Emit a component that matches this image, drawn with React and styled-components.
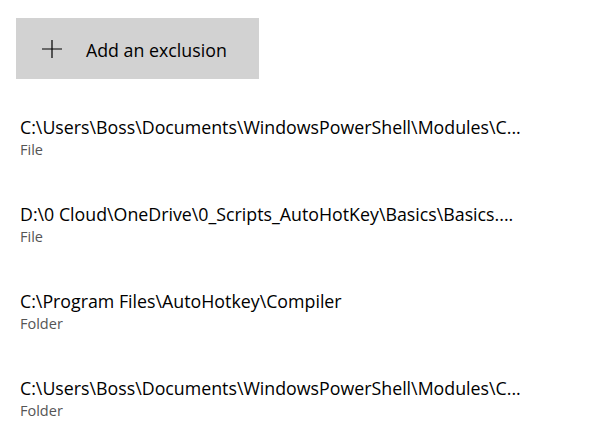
import styled, { createGlobalStyle } from "styled-components";

const GlobalStyle = createGlobalStyle`
  html, body {
    margin: 0;
    padding: 0;
    background: #ffffff;
    font-family: "Open Sans", "Noto Sans", sans-serif;
    color: #000000;
  }
`;

const items = [
  { path: "C:\\Users\\Boss\\Documents\\WindowsPowerShell\\Modules\\C...", kind: "File" },
  { path: "D:\\0 Cloud\\OneDrive\\0_Scripts_AutoHotKey\\Basics\\Basics....", kind: "File" },
  { path: "C:\\Program Files\\AutoHotkey\\Compiler", kind: "Folder" },
  { path: "C:\\Users\\Boss\\Documents\\WindowsPowerShell\\Modules\\C...", kind: "Folder" },
];

function PlusIcon() {
  return (
    <svg width="20" height="18" viewBox="0 0 20 18">
      <path d="M10 0 V18 M0 9 H20" stroke="#000" strokeWidth="1.2" fill="none" />
    </svg>
  );
}

export default function App() {
  return (
    <>
      <GlobalStyle />
      <Page>
        <AddButton>
          <PlusIcon />
          <ButtonLabel>Add an exclusion</ButtonLabel>
        </AddButton>
        <List>
          {items.map((item, i) => (
            <Row key={i}>
              <Path>{item.path}</Path>
              <Kind>{item.kind}</Kind>
            </Row>
          ))}
        </List>
      </Page>
    </>
  );
}

const Page = styled.main`
  width: 615px;
  height: 437px;
  padding: 18px 0 0 16px;
  box-sizing: border-box;
  overflow: hidden;
`;

const AddButton = styled.button`
  display: flex;
  align-items: center;
  gap: 24px;
  width: 243px;
  height: 61px;
  padding: 0 0 0 26px;
  border: none;
  background: #d2d2d2;
  font-family: inherit;
  cursor: pointer;
`;

const ButtonLabel = styled.span`
  font-size: 17.8px;
  line-height: 24px;
  padding-top: 3px;
  color: #000;
`;

const List = styled.ul`
  list-style: none;
  margin: 35px 0 0 4px;
  padding: 0;
  display: flex;
  flex-direction: column;
  gap: 41px;
`;

const Row = styled.li`
  display: flex;
  flex-direction: column;
`;

const Path = styled.span`
  font-size: 17.8px;
  line-height: 26px;
  color: #000;
  white-space: nowrap;
`;

const Kind = styled.span`
  font-size: 14.5px;
  line-height: 20px;
  color: #555555;
`;
